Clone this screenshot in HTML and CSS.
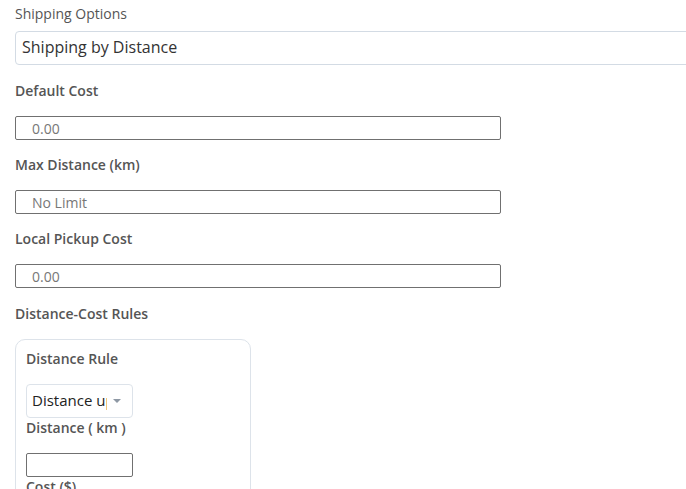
FILE: index.html
```html
<!DOCTYPE html>
<html lang="en">
<head>
    <meta charset="utf-8">
    <meta name="viewport" content="width=device-width, initial-scale=1">
    <title>Shipping Options</title>
    <link rel="stylesheet" href="styles.css">
</head>
<body>
    <div class="settings">
        <div class="field-title">Shipping Options</div>
        <div class="select-wide">Shipping by Distance</div>

        <label class="field-label" for="default-cost">Default Cost</label>
        <input type="text" class="field-input" id="default-cost" value="0.00">

        <label class="field-label" for="max-distance">Max Distance (km)</label>
        <input type="text" class="field-input" id="max-distance" placeholder="No Limit">

        <label class="field-label" for="pickup-cost">Local Pickup Cost</label>
        <input type="text" class="field-input" id="pickup-cost" value="0.00">

        <div class="field-label section">Distance-Cost Rules</div>

        <div class="rule-box">
            <div class="field-label">Distance Rule</div>
            <div class="select-small">
                <span class="select-text">Distance up to</span>
                <span class="caret"></span>
            </div>
            <label class="field-label tight" for="rule-distance">Distance ( km )</label>
            <input type="text" class="rule-input" id="rule-distance">
            <label class="field-label tight" for="rule-cost">Cost ($)</label>
            <input type="text" class="rule-input" id="rule-cost">
        </div>
    </div>
</body>
</html>
```

FILE: styles.css
```css
* {
    margin: 0;
    padding: 0;
    box-sizing: border-box;
    font-family: 'Open Sans', 'Liberation Sans', sans-serif;
}

html, body {
    overflow: hidden;
    background: #fff;
}

.settings {
    padding: 4px 0 0 15px;
    display: flex;
    flex-direction: column;
    align-items: flex-start;
}

.field-title {
    font-size: 14px;
    line-height: 20px;
    color: #555;
}

.select-wide {
    width: 700px;
    height: 34px;
    margin: 7px 0 16px;
    padding: 0 6px;
    border: 1px solid #d3dbe4;
    border-radius: 4px;
    font-size: 16px;
    line-height: 31px;
    color: #333;
}

.field-label {
    display: block;
    font-size: 14px;
    line-height: 20px;
    font-weight: 600;
    color: #555;
    margin-bottom: 15px;
}

.field-label.section {
    margin-top: 1px;
}

.field-label.tight {
    margin-bottom: 0;
}

.field-input {
    width: 486px;
    height: 24px;
    margin-bottom: 15px;
    padding: 0 16px;
    border: 1px solid #707070;
    border-radius: 2px;
    font-size: 14px;
    color: #777;
    background: #fff;
}

.field-input::placeholder {
    color: #777;
}

.rule-box {
    width: 236px;
    padding: 9px 10px 20px;
    border: 1px solid #dde3ea;
    border-radius: 10px;
    display: flex;
    flex-direction: column;
    align-items: flex-start;
}

.select-small {
    width: 107px;
    height: 34px;
    padding: 0 0 3px 5px;
    border: 1px solid #dde3ea;
    border-radius: 4px;
    display: flex;
    align-items: center;
}

.select-text {
    width: 75px;
    overflow: hidden;
    white-space: nowrap;
    font-size: 15px;
    color: #222;
}

.caret {
    margin: 2px 0 0 6px;
    width: 0;
    height: 0;
    border-left: 4px solid transparent;
    border-right: 4px solid transparent;
    border-top: 4px solid #8e98a4;
}

.rule-input {
    width: 107px;
    height: 24px;
    margin: 15px 0 0;
    border: 1px solid #707070;
    border-radius: 2px;
    background: #fff;
}
```
